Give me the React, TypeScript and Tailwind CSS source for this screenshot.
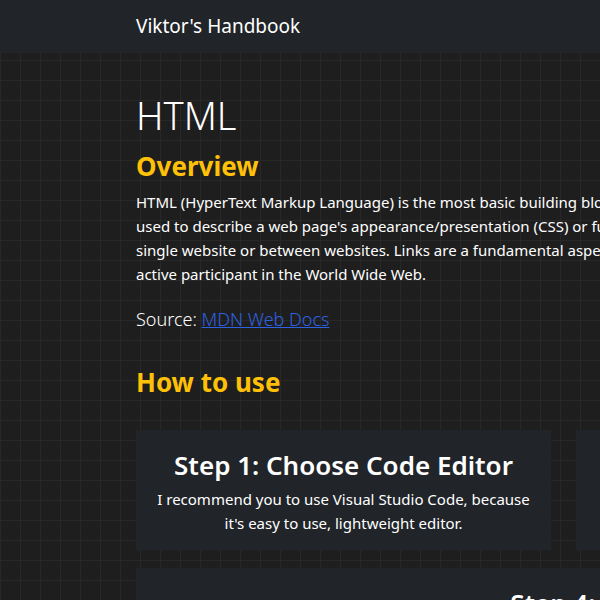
import React from "react";

const STEPS = [
  {
    title: "Step 1: Choose Code Editor",
    text: "I recommend you to use Visual Studio Code, because it's easy to use, lightweight editor.",
  },
  {
    title: "Step 2: Create a File",
    text: "Save a new file as index.html.",
  },
  {
    title: "Step 3: Write Code",
    text: "Type the basic document structure.",
  },
];

export default function App() {
  return (
    <div className="min-h-[600px] w-full overflow-hidden bg-[#1e1e1e] bg-[linear-gradient(to_right,#282828_1px,transparent_1px),linear-gradient(to_bottom,#282828_1px,transparent_1px)] bg-[size:20px_20px] font-['Noto_Sans',sans-serif] text-white">
      {/* Navbar */}
      <nav className="h-[53px] bg-[#212529] flex items-center pl-[136px]">
        <span className="text-[19px] leading-none">Viktor's Handbook</span>
      </nav>

      <main className="pl-[136px] w-[1400px] pt-[40px]">
        <h1 className="text-[38px] font-light leading-[1.2]">HTML</h1>
        <h2 className="mt-[12px] text-[26px] font-bold leading-[1.2] text-[#ffc107]">Overview</h2>
        <p className="mt-[8px] text-[15px] leading-[24px] whitespace-nowrap">
          HTML (HyperText Markup Language) is the most basic building block of the Web. Other technologies besides HTML are generally
          <br />
          used to describe a web page's appearance/presentation (CSS) or functionality/behavior (JavaScript). Hyperlinks connect pages within a
          <br />
          single website or between websites. Links are a fundamental aspect of the Web. By uploading content to the Internet, you become an
          <br />
          active participant in the World Wide Web.
        </p>
        <p className="mt-[20px] text-[18px] font-light leading-[27px]">
          Source:{" "}
          <a href="#" className="text-[#2d62e0] underline">
            MDN Web Docs
          </a>
        </p>

        <h2 className="mt-[34px] text-[26px] font-bold leading-[1.2] text-[#ffc107]">How to use</h2>

        <div className="mt-[32px] grid grid-cols-[415px_415px_415px] gap-x-[25px] gap-y-[18px]">
          {STEPS.map((s) => (
            <div key={s.title} className="bg-[#212529] h-[120px] px-[18px] pt-[20px] text-center">
              <h3 className="text-[26px] font-semibold leading-[1.2]">{s.title}</h3>
              <p className="mt-[6px] text-[15px] leading-[24px]">{s.text}</p>
            </div>
          ))}
          <div className="col-span-3 bg-[#212529] h-[120px] pt-[20px] text-center">
            <h3 className="text-[26px] font-semibold leading-[1.2]">Step 4: Open the HTML File in Your Browser</h3>
          </div>
        </div>
      </main>
    </div>
  );
}
